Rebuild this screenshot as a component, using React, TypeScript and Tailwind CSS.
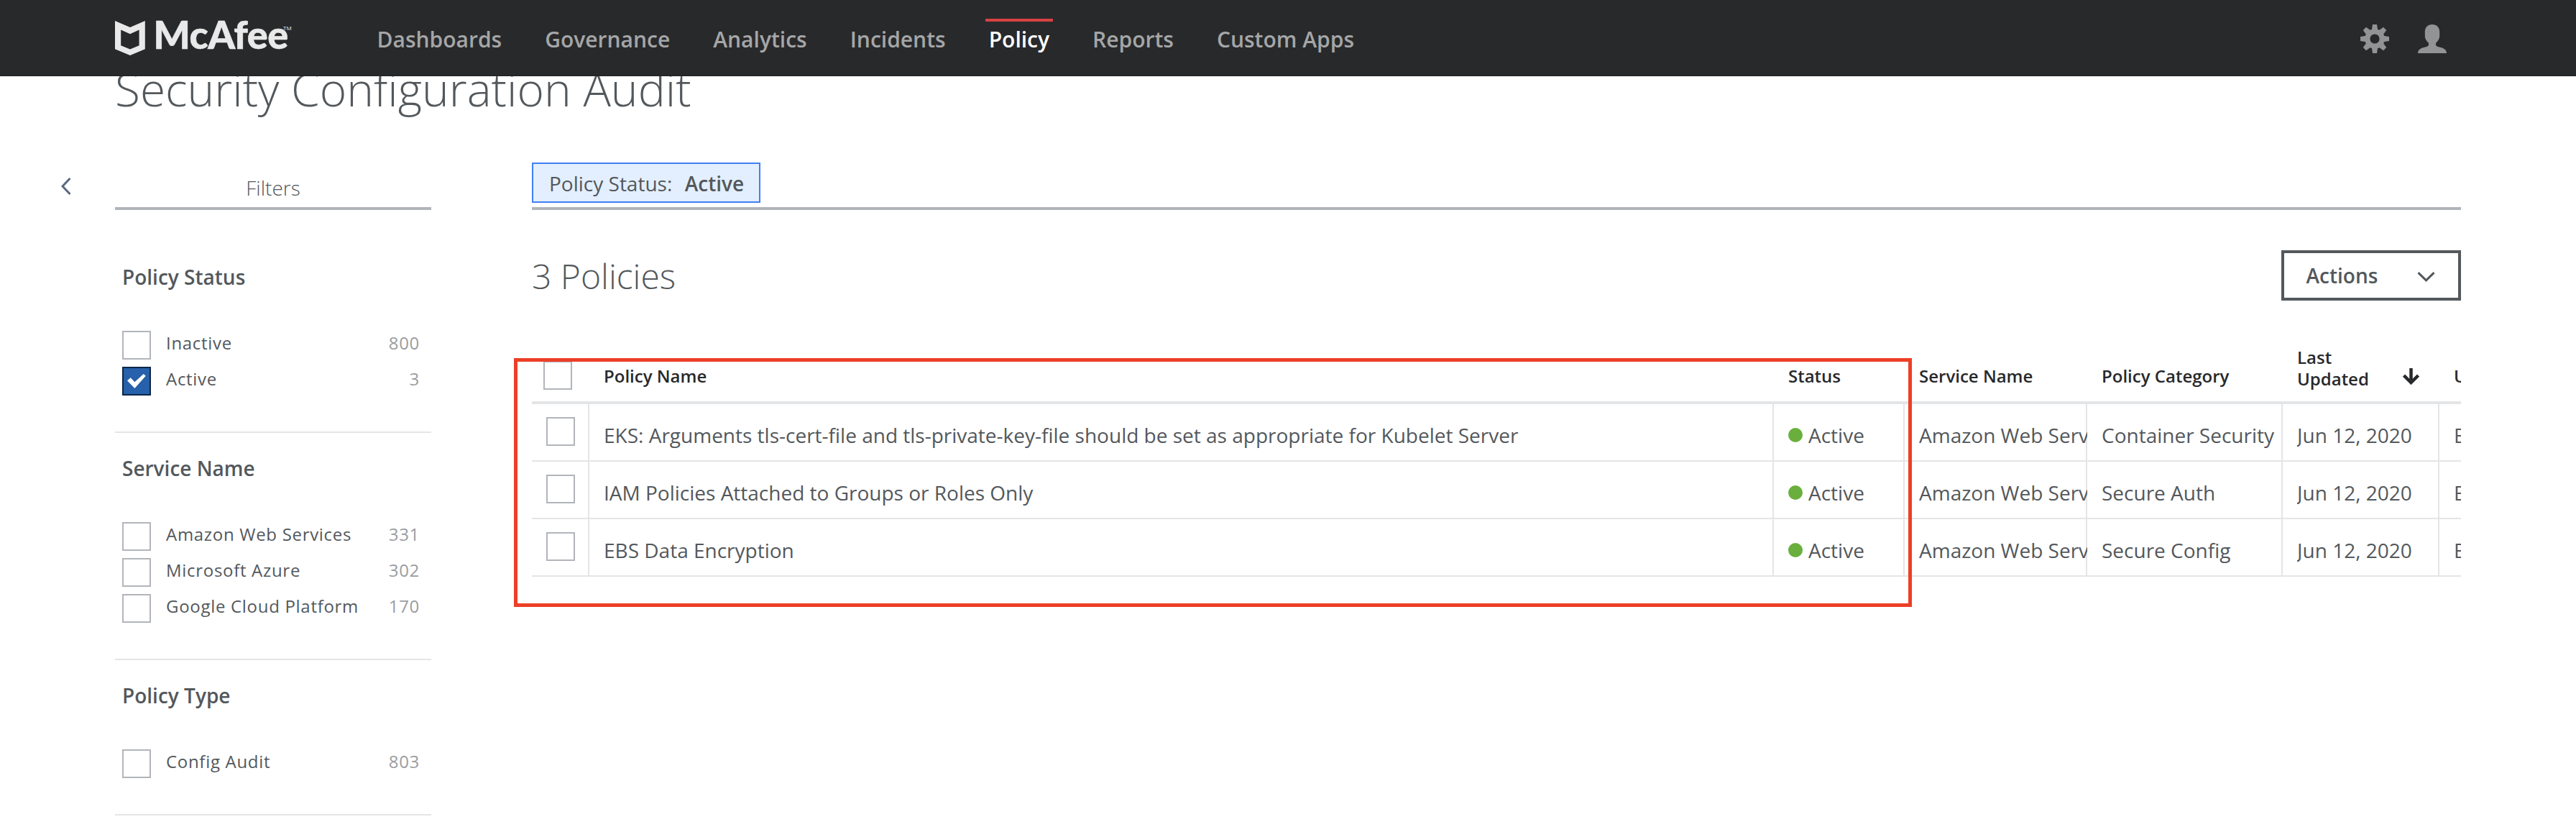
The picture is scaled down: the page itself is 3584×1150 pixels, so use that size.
import type { ReactNode } from "react";

const navItems = ["Dashboards", "Governance", "Analytics", "Incidents", "Policy", "Reports", "Custom Apps"];

type FilterOption = { label: string; count: number; checked?: boolean };

const filterGroups: { title: string; options: FilterOption[] }[] = [
  {
    title: "Policy Status",
    options: [
      { label: "Inactive", count: 800 },
      { label: "Active", count: 3, checked: true },
    ],
  },
  {
    title: "Service Name",
    options: [
      { label: "Amazon Web Services", count: 331 },
      { label: "Microsoft Azure", count: 302 },
      { label: "Google Cloud Platform", count: 170 },
    ],
  },
  { title: "Policy Type", options: [{ label: "Config Audit", count: 803 }] },
];

const policies = [
  {
    name: "EKS: Arguments tls-cert-file and tls-private-key-file should be set as appropriate for Kubelet Server",
    category: "Container Security",
  },
  { name: "IAM Policies Attached to Groups or Roles Only", category: "Secure Auth" },
  { name: "EBS Data Encryption", category: "Secure Config" },
];

const columns = "grid grid-cols-[80px_1648px_182px_254px_272px_218px_30px]";

function Logo() {
  return (
    <svg className="block h-[50px] w-[250px]" viewBox="0 0 250 50" fill="#e9e9e9">
      <path
        fillRule="evenodd"
        d="M0 1 21 10 41.8 1V40.2L21 49 0 40.2ZM8.2 13.6V35.2L21 40.6 33.6 35.2V13.6L21 19.2Z"
      />
      <text x="53.5" y="39.8" fontFamily="Lato, sans-serif" fontWeight="900" fontSize="54" letterSpacing="-0.5" stroke="#e9e9e9" strokeWidth="0.6">
        McAfee
      </text>
      <text x="234" y="14.4" fontFamily="Open Sans, sans-serif" fontSize="8">
        TM
      </text>
    </svg>
  );
}

function GearIcon() {
  return (
    <svg className="size-10" viewBox="0 0 40 40" fill="#929395">
      <path fillRule="evenodd" d="M20 6.2a13.8 13.8 0 1 0 0 27.6 13.8 13.8 0 0 0 0-27.6Zm0 7.2a6.6 6.6 0 1 1 0 13.2 6.6 6.6 0 0 1 0-13.2Z" />
      {[0, 45, 90, 135, 180, 225, 270, 315].map((angle) => (
        <path key={angle} d="M17 0h6l1.2 8h-8.4Z" transform={`rotate(${angle} 20 20)`} />
      ))}
    </svg>
  );
}

function UserIcon() {
  return (
    <svg className="size-10" viewBox="0 0 40 40" fill="#929395">
      <path d="M20 0c6 0 10.2 4 10.2 10.500V16c0 4.500-2.700 7.200-4.400 9-1.500 1.700-1.200 4.700 1.500 5.800C31 32.300 40 32.500 40 40H0c0-7.500 9-7.700 12.700-9.200 2.700-1.100 3-4.100 1.500-5.800-1.700-1.800-4.400-4.500-4.400-9v-5.500C9.800 4 14 0 20 0Z" />
    </svg>
  );
}

function Checkbox({ checked = false }: { checked?: boolean }) {
  if (checked) {
    return (
      <span className="block size-10 shrink-0 border-2 border-[#0d2748] bg-[#2760ab]">
        <svg className="block size-9" viewBox="2 2 36 36" fill="#fff">
          <path d="M29.700 10l3 2.700L17.400 30 7 19.300l4.700-4 5.700 6Z" />
        </svg>
      </span>
    );
  }
  return <span className="block size-10 shrink-0 border-2 border-[#b1b5ba] bg-white" />;
}

function FilterGroup({ title, options }: { title: string; options: FilterOption[] }) {
  return (
    <section className="border-b-2 border-[#e5e5e5] pt-[29px] pr-4 pb-10 pl-[10px]">
      <h3 className="mb-[55px] text-[28px] leading-[40px] font-semibold">{title}</h3>
      {options.map((option) => (
        <div key={option.label} className="flex h-[50px] items-start text-[24px] leading-[33px] tracking-[0.7px]">
          <Checkbox checked={option.checked} />
          <span className="ml-[21px]">{option.label}</span>
          <span className="ml-auto text-[#999da1]">{option.count}</span>
        </div>
      ))}
    </section>
  );
}

function HeaderCell({ children }: { children?: ReactNode }) {
  return <div className="flex items-end pb-5 pl-5">{children}</div>;
}

function Cell({ children }: { children?: ReactNode }) {
  return (
    <div className="min-w-0 border-r-2 border-[#e3e5e7] pt-2 pl-5">
      <div className="-mr-[2px] flex h-[70px] items-center overflow-hidden whitespace-nowrap">{children}</div>
    </div>
  );
}

function PolicyTable() {
  return (
    <div className="relative mt-[50px]">
      <div className="w-[2684px] overflow-hidden">
        <div
          className={`${columns} h-[94px] border-b-4 border-[#e3e5e7] text-[24px] leading-[30px] font-semibold text-[#28292b]`}
        >
          <div className="flex items-end pb-4 pl-4">
            <Checkbox />
          </div>
          <HeaderCell>Policy Name</HeaderCell>
          <HeaderCell>Status</HeaderCell>
          <HeaderCell>Service Name</HeaderCell>
          <HeaderCell>Policy Category</HeaderCell>
          <div className="flex items-end justify-between pr-[28px] pb-4 pl-5">
            <span className="w-[110px]">Last Updated</span>
            <svg className="mb-[7px] h-[23px] w-[23px]" viewBox="0 0 23 23" fill="none" stroke="#28292b" strokeWidth="4.5">
              <path d="M11.500 0V20M1.500 10l10 10 10-10" />
            </svg>
          </div>
          <div className="flex items-end pb-5 pl-[20px]">U</div>
        </div>
        {policies.map((policy) => (
          <div key={policy.name} className={`${columns} h-20 border-b-2 border-[#e3e5e7] text-[28px]`}>
            <div className="border-r-2 border-[#e3e5e7] pt-[18px] pl-5">
              <Checkbox />
            </div>
            <Cell>{policy.name}</Cell>
            <Cell>
              <span className="mr-[8px] size-5 shrink-0 rounded-full bg-[#6aaf3d]" />
              Active
            </Cell>
            <Cell>Amazon Web Services</Cell>
            <Cell>{policy.category}</Cell>
            <Cell>Jun 12, 2020</Cell>
            <div className="flex items-center pt-2 pl-[20px]">E</div>
          </div>
        ))}
      </div>
      <div className="pointer-events-none absolute top-[30px] -left-[25px] h-[346px] w-[1945px] border-[5px] border-[#ec3f27]" />
    </div>
  );
}

export default function App() {
  return (
    <div className="h-[1150px] w-[3584px] overflow-hidden bg-white font-['Open_Sans',sans-serif] text-[#53585c]">
      <header className="relative z-10 flex h-[106px] items-start border-b border-[#1f2022] bg-[#28292b] pl-[160px]">
        <div className="mt-7">
          <Logo />
        </div>
        <nav className="ml-[109.500px] flex gap-[50px] pt-[26px] text-[30px] leading-[42px] font-semibold">
          {navItems.map((item) => (
            <a
              key={item}
              className={
                item === "Policy"
                  ? "border-t-4 border-[#d64242] px-[5px] pt-1 text-white"
                  : "border-t-4 border-transparent px-[5px] pt-1 text-[#a5a6a7]"
              }
            >
              {item}
            </a>
          ))}
        </nav>
        <div className="mt-[34px] mr-[180px] ml-auto flex gap-10">
          <GearIcon />
          <UserIcon />
        </div>
      </header>

      <h1 className="-mt-[22px] pl-[160px] text-[64px] leading-[80px] font-light">Security Configuration Audit</h1>

      <div className="mt-[62px] flex items-start pl-[85px]">
        <svg className="mt-[21px] mr-[61px] h-6 w-[14px]" viewBox="0 0 14 24" fill="none" stroke="#5b6880" strokeWidth="3">
          <path d="M12.500 1 2 12l10.500 11" />
        </svg>

        <aside className="mr-[140px] w-[440px]">
          <div className="mb-11 h-[66px] border-b-4 border-[#b1b5ba] pt-2 text-center text-[28px] leading-[54px] font-light">
            Filters
          </div>
          {filterGroups.map((group) => (
            <FilterGroup key={group.title} {...group} />
          ))}
        </aside>

        <main className="w-[2684px]">
          <div className="h-[66px] border-b-4 border-[#b1b5ba]">
            <div className="flex h-14 w-[318px] border-2 border-[#4080f5] bg-[#e3effe] pl-[22px] text-[28px] leading-[54px] whitespace-nowrap">
              Policy Status:<span className="ml-[17.500px] font-semibold">Active</span>
            </div>
          </div>
          <div className="mt-14 flex h-[70px] items-center justify-between">
            <h2 className="pt-[2px] text-[48px] leading-[70px] font-light">3 Policies</h2>
            <button className="flex h-[70px] w-[250px] items-center justify-between border-4 border-[#53585c] pr-[32px] pl-[30.500px] text-[28px] leading-[62px] font-semibold">
              Actions
              <svg className="mt-[3px] h-[14px] w-[25px]" viewBox="0 0 25 14" fill="none" stroke="#53585c" strokeWidth="3">
                <path d="M1.500 1.200l11 10.600 11-10.600" />
              </svg>
            </button>
          </div>
          <PolicyTable />
        </main>
      </div>
    </div>
  );
}
